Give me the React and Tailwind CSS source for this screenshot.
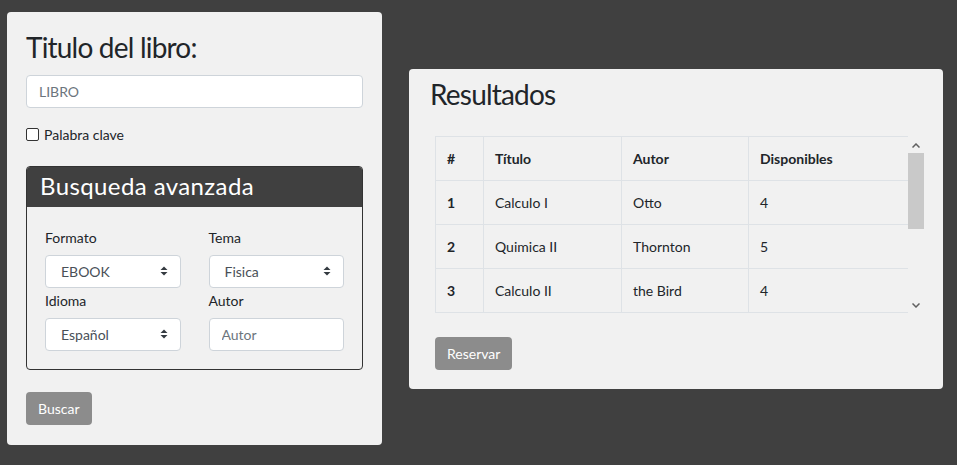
import React from 'react';

const rows = [
  { n: 1, titulo: 'Calculo I', autor: 'Otto', disp: 4 },
  { n: 2, titulo: 'Quimica II', autor: 'Thornton', disp: 5 },
  { n: 3, titulo: 'Calculo II', autor: 'the Bird', disp: 4 },
];

const SelectArrows = () => (
  <svg width="8" height="10" viewBox="0 0 8 10" className="shrink-0">
    <path d="M4 0.5 L7.5 4 L0.5 4 Z" fill="#343a40" />
    <path d="M4 9.5 L7.5 6 L0.5 6 Z" fill="#343a40" />
  </svg>
);

const FakeSelect = ({ value }) => (
  <div className="flex h-[33px] items-center justify-between rounded-[4px] border border-[#ced4da] bg-white pl-[15px] pr-[12px] text-[14px] text-[#495057]">
    <span>{value}</span>
    <SelectArrows />
  </div>
);

const Field = ({ label, children }) => (
  <div className="flex flex-col">
    <label className="mb-[7px] h-[21px] leading-[21px] text-[14px] text-[#212529]">{label}</label>
    {children}
  </div>
);

export default function App() {
  return (
    <div
      className="flex min-h-[465px] items-start gap-[27px] bg-[#404040] pl-[7px] pt-[12px] text-[#212529]"
      style={{ fontFamily: '"Segoe UI", Lato, sans-serif' }}
    >
      {/* Busqueda */}
      <div className="w-[375px] rounded-[4px] bg-[#f1f1f1] px-[19px] pb-[20px] pt-[19px]">
        <h3 className="mb-[10px] text-[28px] leading-[33.6px] font-normal tracking-[-0.8px]">Titulo del libro:</h3>
        <input
          type="text"
          placeholder="LIBRO"
          className="block h-[33px] w-[337px] rounded-[4px] border border-[#ced4da] bg-white px-[12px] text-[14px] placeholder:text-[#6c757d] outline-none"
        />
        <label className="mt-[16px] flex h-[21px] items-center gap-[5px] text-[14px]">
          <span className="inline-block h-[13px] w-[13px] rounded-[2px] border border-[#333] bg-white" />
          Palabra clave
        </label>

        <div className="mt-[21px] w-[337px] rounded-[4px] border border-[#333]">
          <div className="h-[40px] rounded-t-[3px] bg-[#404040] px-[13px] text-[24px] leading-[38px] tracking-[0.4px] text-white">
            Busqueda avanzada
          </div>
          <div className="grid grid-cols-2 gap-x-[28px] gap-y-[2px] px-[18px] pb-[18px] pt-[20px]">
            <Field label="Formato">
              <FakeSelect value="EBOOK" />
            </Field>
            <Field label="Tema">
              <FakeSelect value="Fisica" />
            </Field>
            <Field label="Idioma">
              <FakeSelect value="Español" />
            </Field>
            <Field label="Autor">
              <input
                type="text"
                placeholder="Autor"
                className="block h-[33px] w-full rounded-[4px] border border-[#ced4da] bg-white px-[12px] text-[14px] placeholder:text-[#6c757d] outline-none"
              />
            </Field>
          </div>
        </div>

        <button className="mt-[22px] h-[33px] rounded-[4px] bg-[#8c8c8c] px-[12px] text-[14px] text-white">
          Buscar
        </button>
      </div>

      {/* Resultados */}
      <div className="mt-[57px] w-[534px] rounded-[4px] bg-[#f1f1f1] pb-[19px] pl-[21px] pr-[19px] pt-[9px]">
        <h3 className="text-[28px] leading-[33.6px] font-normal tracking-[-0.8px]">Resultados</h3>
        <div className="pl-[5px] pt-[24px]">
          <div className="flex h-[177px] w-[489px] overflow-hidden">
            <div className="w-[473px] shrink-0">
              <table className="w-[473px] table-fixed border-collapse text-[14px]">
                <colgroup>
                  <col className="w-[48px]" />
                  <col className="w-[138px]" />
                  <col className="w-[127px]" />
                  <col className="w-[160px]" />
                </colgroup>
                <thead>
                  <tr className="h-[44px]">
                    <th className="border border-[#dee2e6] px-[11px] text-left font-bold">#</th>
                    <th className="border border-[#dee2e6] px-[11px] text-left font-bold">Título</th>
                    <th className="border border-[#dee2e6] px-[11px] text-left font-bold">Autor</th>
                    <th className="border border-[#dee2e6] px-[11px] text-left font-bold">Disponibles</th>
                  </tr>
                </thead>
                <tbody>
                  {rows.map((r) => (
                    <tr key={r.n} className="h-[44px]">
                      <td className="border border-[#dee2e6] px-[11px] font-bold">{r.n}</td>
                      <td className="border border-[#dee2e6] px-[11px]">{r.titulo}</td>
                      <td className="border border-[#dee2e6] px-[11px]">{r.autor}</td>
                      <td className="border border-[#dee2e6] px-[11px]">{r.disp}</td>
                    </tr>
                  ))}
                </tbody>
              </table>
            </div>
            {/* scrollbar */}
            <div className="flex h-[177px] w-[16px] shrink-0 flex-col bg-[#f1f1f1]">
              <div className="flex h-[17px] items-center justify-center pt-[2px]">
                <svg width="8" height="5" viewBox="0 0 8 5">
                  <path d="M0.5 4.5 L4 1 L7.5 4.5" fill="none" stroke="#606060" strokeWidth="1.5" />
                </svg>
              </div>
              <div className="flex-1">
                <div className="h-[76px] bg-[#c9c9c9]" />
              </div>
              <div className="flex h-[17px] items-center justify-center pt-[3px]">
                <svg width="8" height="5" viewBox="0 0 8 5">
                  <path d="M0.5 0.5 L4 4 L7.5 0.5" fill="none" stroke="#606060" strokeWidth="1.5" />
                </svg>
              </div>
            </div>
          </div>
          <button className="mt-[24px] h-[33px] rounded-[4px] bg-[#8c8c8c] px-[12px] text-[14px] text-white">
            Reservar
          </button>
        </div>
      </div>
    </div>
  );
}
